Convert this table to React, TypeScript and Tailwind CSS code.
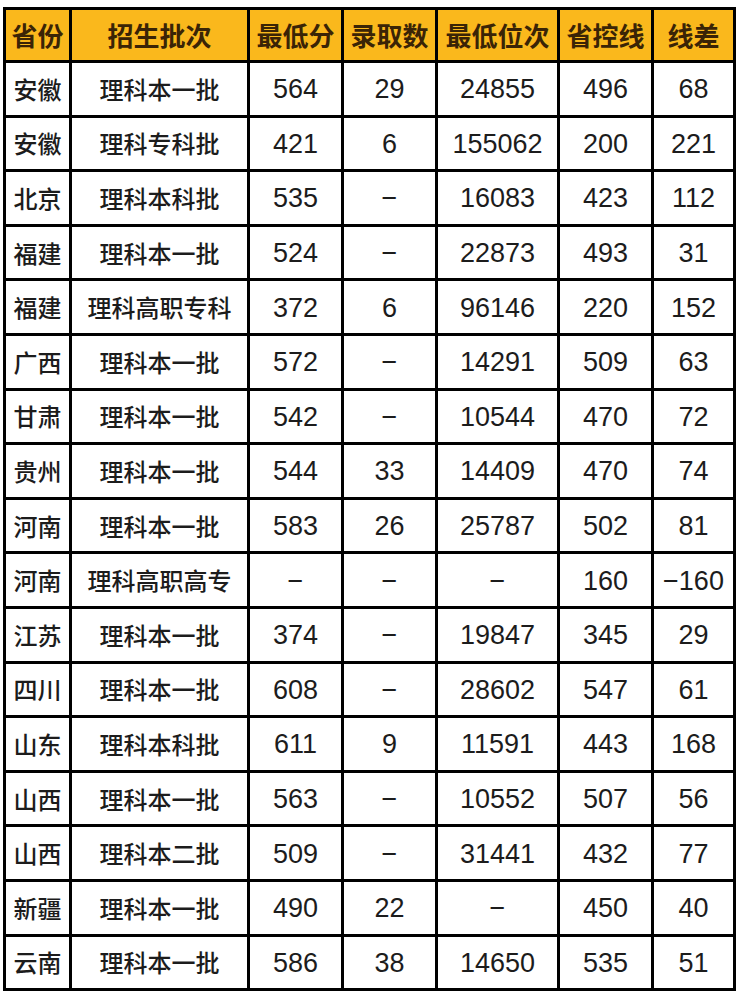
const headers = ["省份", "招生批次", "最低分", "录取数", "最低位次", "省控线", "线差"]

const rows: string[][] = [
  ["安徽", "理科本一批", "564", "29", "24855", "496", "68"],
  ["安徽", "理科专科批", "421", "6", "155062", "200", "221"],
  ["北京", "理科本科批", "535", "−", "16083", "423", "112"],
  ["福建", "理科本一批", "524", "−", "22873", "493", "31"],
  ["福建", "理科高职专科", "372", "6", "96146", "220", "152"],
  ["广西", "理科本一批", "572", "−", "14291", "509", "63"],
  ["甘肃", "理科本一批", "542", "−", "10544", "470", "72"],
  ["贵州", "理科本一批", "544", "33", "14409", "470", "74"],
  ["河南", "理科本一批", "583", "26", "25787", "502", "81"],
  ["河南", "理科高职高专", "−", "−", "−", "160", "−160"],
  ["江苏", "理科本一批", "374", "−", "19847", "345", "29"],
  ["四川", "理科本一批", "608", "−", "28602", "547", "61"],
  ["山东", "理科本科批", "611", "9", "11591", "443", "168"],
  ["山西", "理科本一批", "563", "−", "10552", "507", "56"],
  ["山西", "理科本二批", "509", "−", "31441", "432", "77"],
  ["新疆", "理科本一批", "490", "22", "−", "450", "40"],
  ["云南", "理科本一批", "586", "38", "14650", "535", "51"],
]

export default function App() {
  return (
    <div className="min-h-screen bg-white pt-[7px] pl-[3px] font-['Liberation_Sans','Noto_Sans_CJK_SC',sans-serif]">
      <div className="grid w-fit grid-cols-[63px_175px_91px_91px_119px_91px_79px] grid-rows-[50px_repeat(17,51.6px)] gap-[3px] bg-black p-[3px]">
        {headers.map((h) => (
          <div
            key={h}
            className="flex items-center justify-center bg-[#fab81c] text-[26px] font-bold leading-none text-[#3a2406] font-['Noto_Sans_CJK_SC',sans-serif]"
          >
            {h}
          </div>
        ))}
        {rows.map((r, i) =>
          r.map((c, j) => (
            <div
              key={i + "-" + j}
              className={
                j < 2
                  ? "flex items-center justify-center bg-white text-[24px] font-medium leading-none text-[#1c1c1c] font-['Noto_Sans_CJK_SC',sans-serif]"
                  : "flex items-center justify-center bg-white pt-[2px] text-[27px] leading-none text-[#1c1c1c]"
              }
            >
              {c}
            </div>
          ))
        )}
      </div>
    </div>
  )
}
